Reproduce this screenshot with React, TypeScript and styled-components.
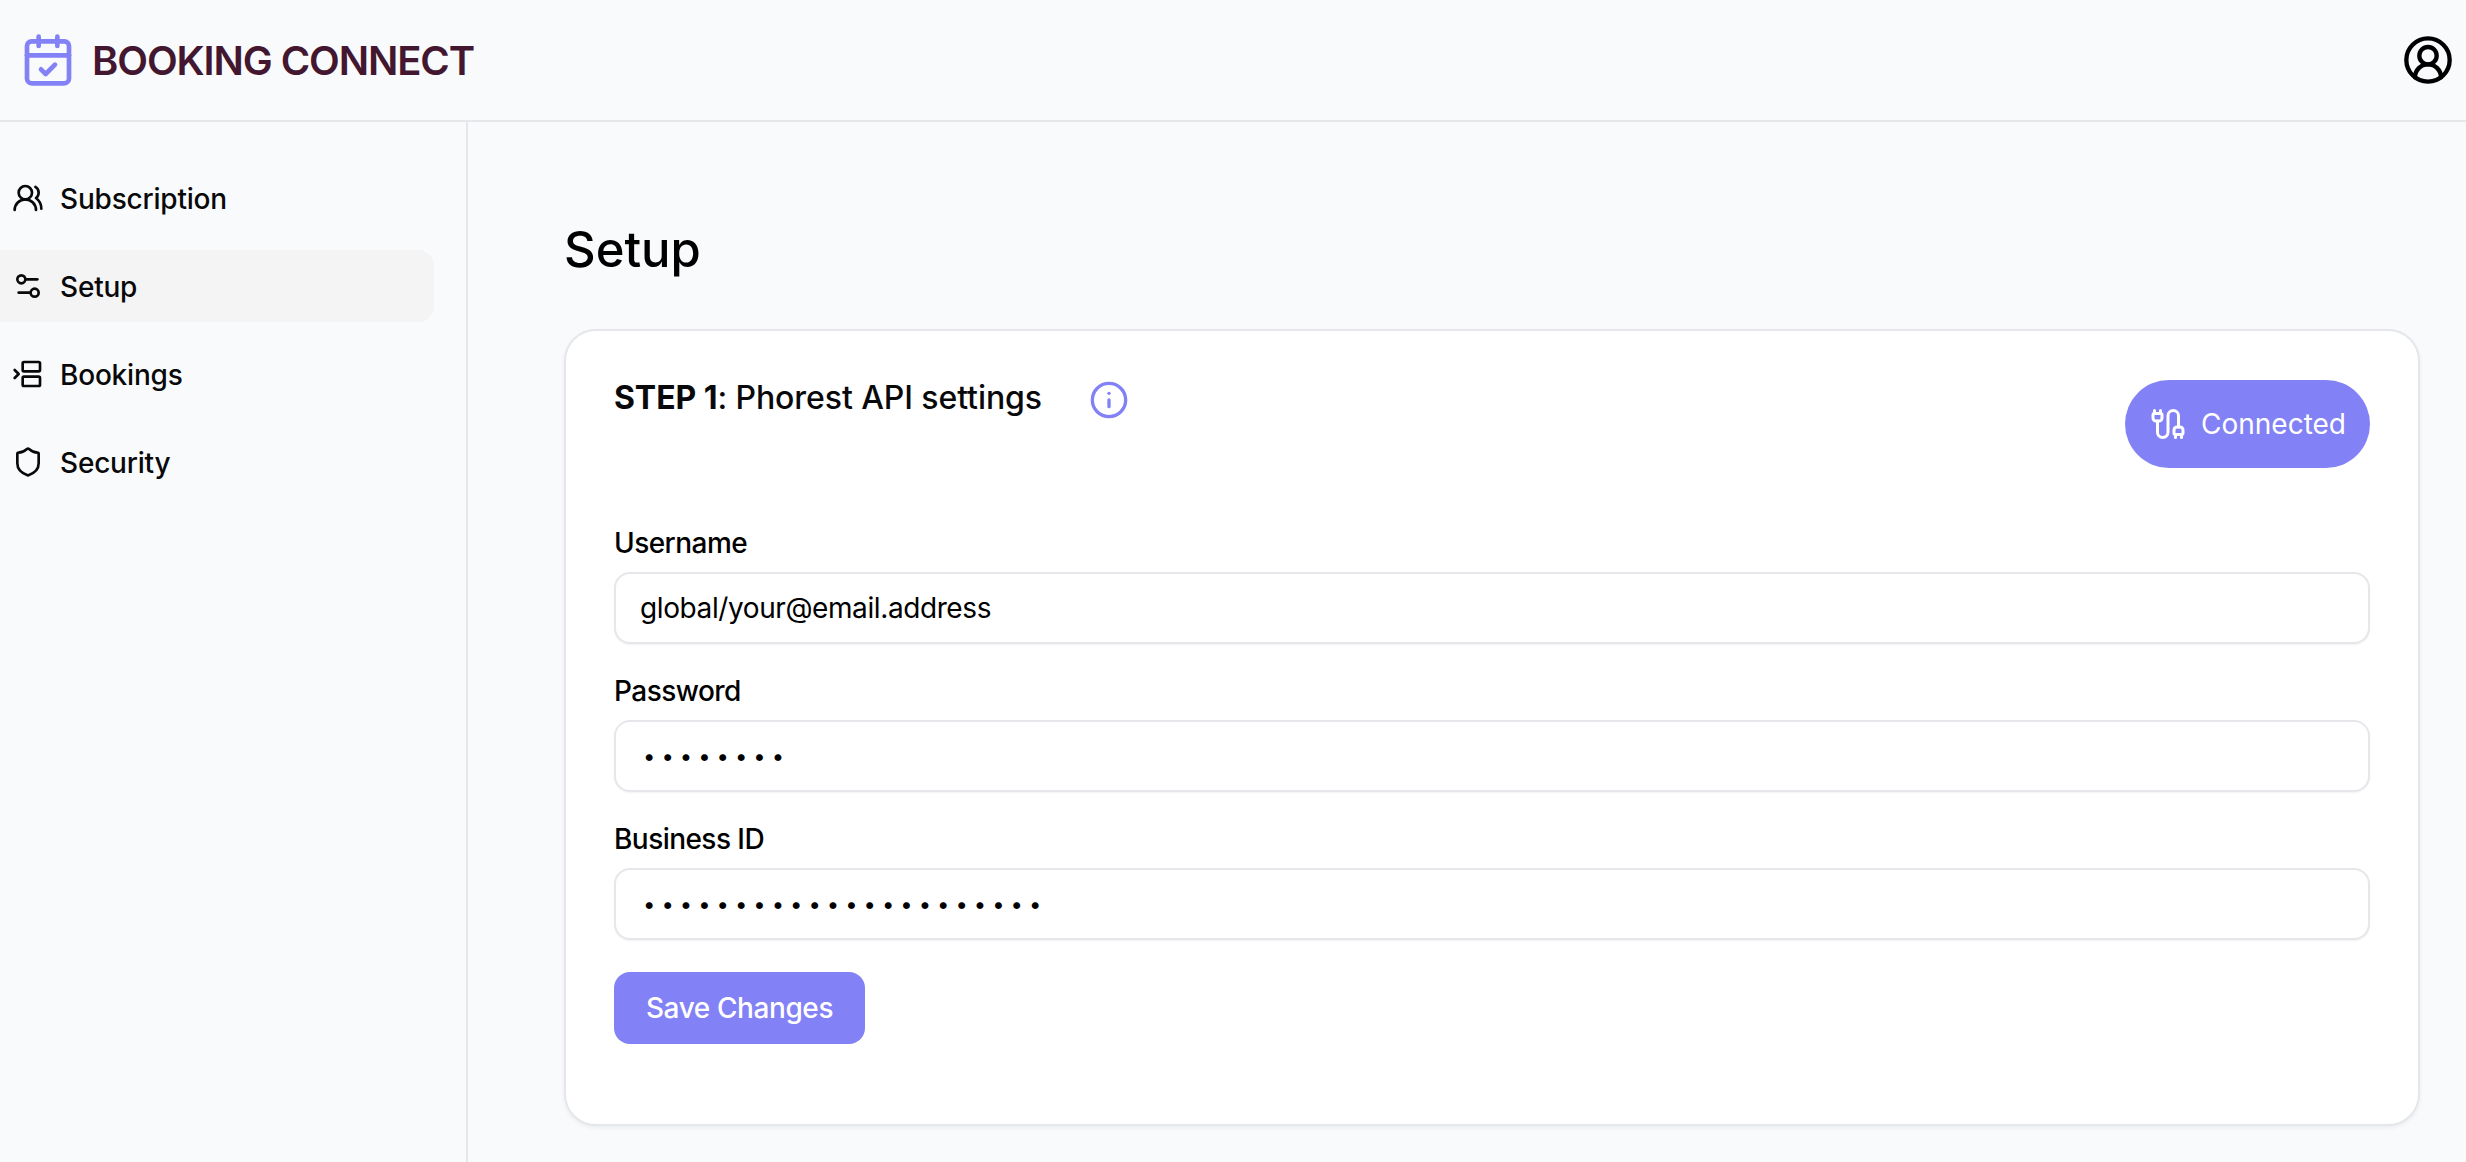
import styled, { createGlobalStyle } from "styled-components";
import {
  BetweenHorizontalStart,
  Cable,
  CalendarCheck,
  CircleUserRound,
  Info,
  Settings2,
  Shield,
  UsersRound,
} from "lucide-react";

const GlobalStyle = createGlobalStyle`
  * {
    box-sizing: border-box;
  }
  html, body {
    margin: 0;
    padding: 0;
    background: #f9fafb;
  }
  body {
    font-family: "Inter", "Liberation Sans", sans-serif;
    color: #09090b;
  }
`;

const Page = styled.div`
  display: flex;
  flex-direction: column;
  height: 1162px;
  overflow: hidden;
`;

const Header = styled.header`
  display: flex;
  align-items: center;
  justify-content: space-between;
  height: 122px;
  flex-shrink: 0;
  padding: 0 12px 0 20px;
  border-bottom: 2px solid #e5e7eb;
`;

const Brand = styled.div`
  display: flex;
  align-items: center;
  gap: 16px;
  color: #8381f6;
`;

const BrandName = styled.span`
  font-size: 40px;
  font-weight: 600;
  letter-spacing: -1.1px;
  color: #42172f;
`;

const Body = styled.div`
  display: flex;
  flex: 1;
`;

const Sidebar = styled.nav`
  display: flex;
  flex-direction: column;
  gap: 16px;
  width: 468px;
  flex-shrink: 0;
  padding: 40px 32px 0 0;
  border-right: 2px solid #e5e7eb;
`;

const NavItem = styled.a<{ $active?: boolean }>`
  display: flex;
  align-items: center;
  gap: 16px;
  height: 72px;
  padding-left: 12px;
  border-radius: 0 16px 16px 0;
  background: ${(p) => (p.$active ? "#f4f4f5" : "transparent")};
  color: #09090b;
`;

const NavLabel = styled.span`
  margin-top: 2px;
  font-size: 28px;
  font-weight: 500;
  letter-spacing: -0.2px;
`;

const Content = styled.main`
  flex: 1;
  padding: 92px 46px 0 96px;
`;

const Title = styled.h1`
  margin: 0 0 43px;
  font-size: 49px;
  line-height: 72px;
  font-weight: 500;
  letter-spacing: 0;
  color: #000;
`;

const Card = styled.section`
  height: 797px;
  padding: 49px 48px 0;
  background: #fff;
  border: 2px solid #e5e7eb;
  border-radius: 32px;
  box-shadow: 0 2px 4px rgba(0, 0, 0, 0.06);
`;

const CardHead = styled.div`
  display: flex;
  align-items: flex-start;
  justify-content: space-between;
  height: 146px;
`;

const StepTitle = styled.div`
  display: flex;
  align-items: center;
  gap: 47px;
  margin-top: -2px;
  color: #8381f6;
`;

const StepText = styled.h2`
  margin: 0 0 3px;
  font-size: 32px;
  line-height: 40px;
  font-weight: 500;
  letter-spacing: -0.08px;
  color: #09090b;

  & > b {
    font-weight: 700;
  }
`;

const StatusPill = styled.div`
  display: flex;
  align-items: center;
  gap: 15px;
  height: 88px;
  padding: 0 24px 0 25px;
  border-radius: 44px;
  background: #8381f6;
  color: #fff;
  font-size: 28px;
  font-weight: 400;
`;

const Field = styled.div`
  display: flex;
  flex-direction: column;
  margin-bottom: 30px;
`;

const Label = styled.label`
  margin: -1px 0 11px;
  font-size: 28px;
  line-height: 36px;
  font-weight: 500;
  letter-spacing: -0.55px;
  color: #000;
`;

const Input = styled.input`
  width: 100%;
  height: 72px;
  padding: 0 24px;
  border: 2px solid #e5e7eb;
  border-radius: 16px;
  background: #fff;
  box-shadow: 0 1px 2px rgba(0, 0, 0, 0.05);
  font-family: inherit;
  font-size: 28px;
  font-weight: 400;
  letter-spacing: -0.4px;
  color: #000;
  &:focus {
    outline: none;
  }
`;

const SecretInput = styled(Input)`
  padding-left: 27px;
  font-size: 22px;
  letter-spacing: 6px;
`;

const SaveButton = styled.button`
  display: block;
  margin-top: 32px;
  width: 251px;
  height: 72px;
  border: none;
  border-radius: 16px;
  background: #8381f6;
  color: #fff;
  font-family: inherit;
  font-size: 28px;
  font-weight: 500;
  letter-spacing: -0.4px;
`;

const App = () => {
  return (
    <Page>
      <GlobalStyle />
      <Header>
        <Brand>
          <CalendarCheck size={56} strokeWidth={2} />
          <BrandName>BOOKING CONNECT</BrandName>
        </Brand>
        <CircleUserRound size={52} color="#000" strokeWidth={2} />
      </Header>
      <Body>
        <Sidebar>
          <NavItem>
            <UsersRound size={32} strokeWidth={2} />
            <NavLabel>Subscription</NavLabel>
          </NavItem>
          <NavItem $active>
            <Settings2 size={32} strokeWidth={2} />
            <NavLabel>Setup</NavLabel>
          </NavItem>
          <NavItem>
            <BetweenHorizontalStart size={32} strokeWidth={2} />
            <NavLabel>Bookings</NavLabel>
          </NavItem>
          <NavItem>
            <Shield size={32} strokeWidth={2} />
            <NavLabel>Security</NavLabel>
          </NavItem>
        </Sidebar>
        <Content>
          <Title>Setup</Title>
          <Card>
            <CardHead>
              <StepTitle>
                <StepText>
                  <b>STEP 1</b>: Phorest API settings
                </StepText>
                <Info size={40} strokeWidth={2} />
              </StepTitle>
              <StatusPill>
                <Cable size={36} strokeWidth={2} />
                Connected
              </StatusPill>
            </CardHead>
            <Field>
              <Label>Username</Label>
              <Input type="text" defaultValue="global/your@email.address" />
            </Field>
            <Field>
              <Label>Password</Label>
              <SecretInput type="password" defaultValue="abcdefgh" />
            </Field>
            <Field>
              <Label>Business ID</Label>
              <SecretInput type="password" defaultValue="abcdefghijklmnopqrstuv" />
            </Field>
            <SaveButton>Save Changes</SaveButton>
          </Card>
        </Content>
      </Body>
    </Page>
  );
};

export default App;
